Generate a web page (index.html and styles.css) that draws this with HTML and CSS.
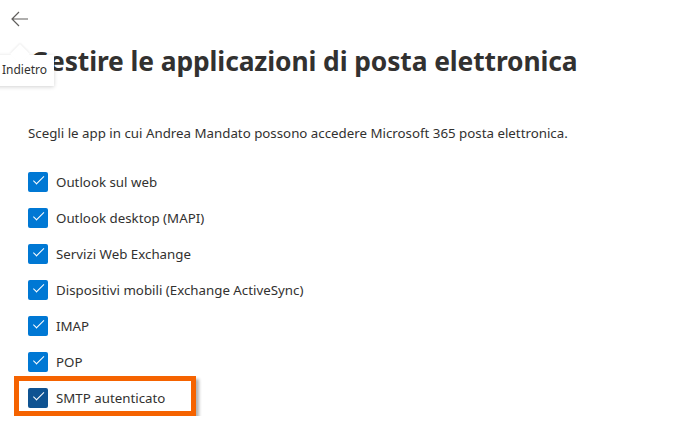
FILE: index.html
```html
<!DOCTYPE html>
<html lang="it">
<head>
  <meta charset="UTF-8">
  <title>Gestire le applicazioni di posta elettronica</title>
  <link rel="stylesheet" href="styles.css">
</head>
<body>
  <div class="top">
    <button class="back" aria-label="Indietro">
      <svg width="18" height="16" viewBox="0 0 18 16"><path d="M8 1 L1 8 L8 15 M1 8 H17" fill="none" stroke="#605e5c" stroke-width="1.2"/></svg>
    </button>
    <div class="tip">Indietro</div>
  </div>

  <div class="page">
    <h1>Gestire le applicazioni di posta elettronica</h1>
    <p class="intro">Scegli le app in cui Andrea Mandato possono accedere Microsoft 365 posta elettronica.</p>

    <ul class="apps">
      <li><span class="box"></span>Outlook sul web</li>
      <li><span class="box"></span>Outlook desktop (MAPI)</li>
      <li><span class="box"></span>Servizi Web Exchange</li>
      <li><span class="box"></span>Dispositivi mobili (Exchange ActiveSync)</li>
      <li><span class="box"></span>IMAP</li>
      <li><span class="box"></span>POP</li>
      <li class="marked"><span class="box dark"></span>SMTP autenticato</li>
    </ul>
  </div>
</body>
</html>
```

FILE: styles.css
```css
body {
  margin: 0;
  font-family: "Noto Sans", "Open Sans", sans-serif;
  color: #323130;
  background: #fff;
}
.top {
  position: relative;
  height: 36px;
  padding: 11px 0 0 11px;
  box-sizing: border-box;
}
.back {
  border: none;
  background: none;
  padding: 0;
  width: 18px;
  height: 16px;
  display: block;
}
.tip {
  position: absolute;
  left: -5px;
  top: 55px;
  z-index: 2;
  background: #fff;
  font-size: 12px;
  line-height: 16px;
  padding: 7px 7px 8px 7px;
  box-shadow: 0 1px 4px rgba(0,0,0,0.18);
  color: #323130;
}
.tip::before {
  content: "";
  position: absolute;
  left: 18px;
  top: -8px;
  width: 14px;
  height: 14px;
  background: #fff;
  transform: rotate(45deg);
  box-shadow: -1px -1px 2px rgba(0,0,0,0.07);
}
.page {
  padding: 0 28px;
}
h1 {
  margin: 7px 0 0 2px;
  font-size: 26.4px;
  font-weight: 700;
  line-height: 36px;
  letter-spacing: -0.1px;
}
.intro {
  font-size: 13.3px;
  margin: 44px 0 0 0;
  line-height: 20px;
}
.apps {
  list-style: none;
  margin: 21px 0 0 0;
  padding: 0;
}
.apps li {
  display: flex;
  align-items: center;
  height: 36px;
  font-size: 13.3px;
}
.box {
  width: 20px;
  height: 20px;
  border-radius: 2px;
  background: #0078d4;
  margin-right: 8px;
  position: relative;
}
.box::after {
  content: "";
  position: absolute;
  left: 5px;
  top: 5px;
  width: 10px;
  height: 4px;
  border-left: 1.3px solid #fff;
  border-bottom: 1.3px solid #fff;
  transform: translate(0, 4px) rotate(-45deg);
  transform-origin: left top;
}
.box.dark {
  background: #0f5392;
}
.apps li.marked {
  box-sizing: border-box;
  margin: -4px 0 0 -14px;
  padding: 4px 0 0 9px;
  width: 182px;
  height: 40px;
  border: 5px solid #f56300;
  box-shadow: 3px 3px 3px rgba(0,0,0,0.3);
}
```
